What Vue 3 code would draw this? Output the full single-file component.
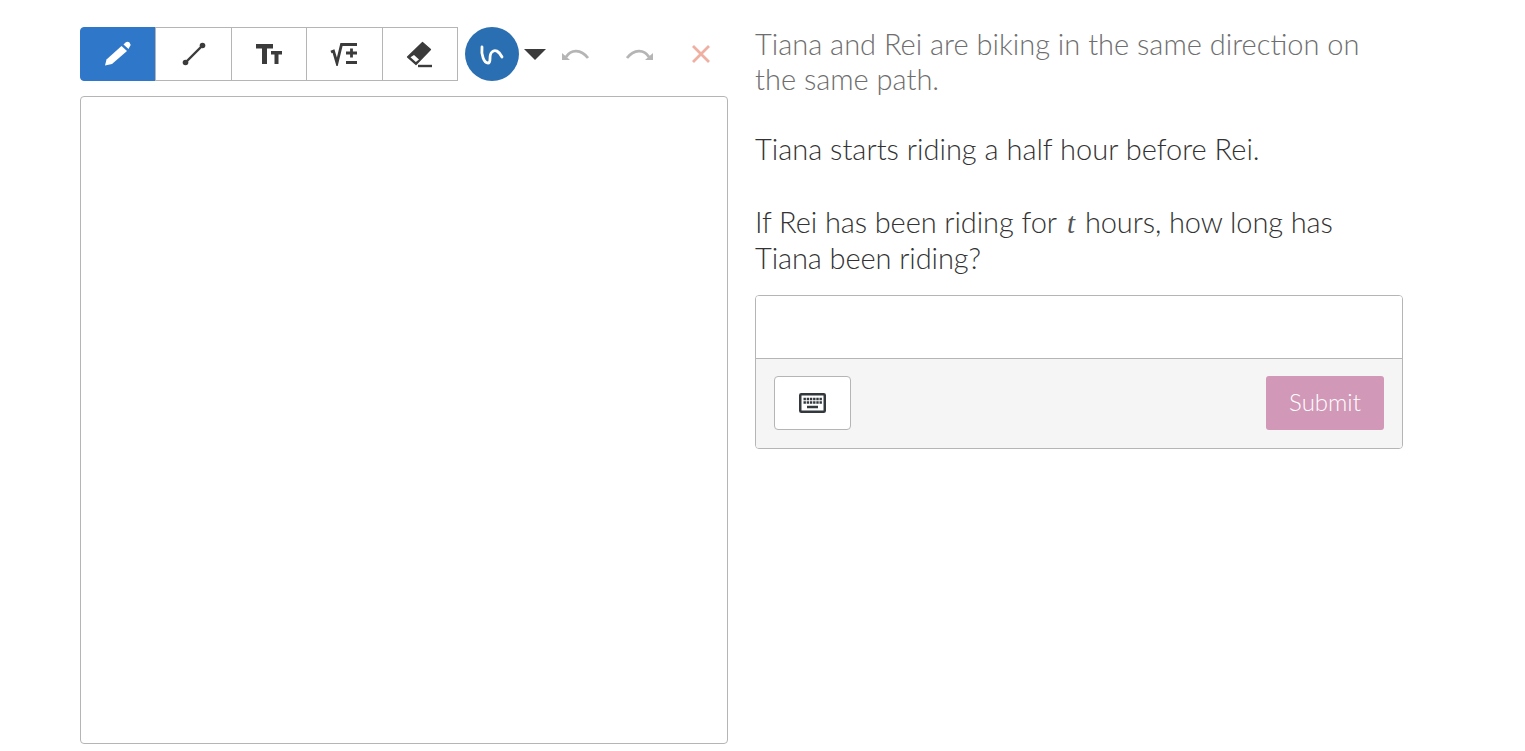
<template>
  <div class="page">
    <div class="left">
      <div class="toolbar">
        <div class="tool-group">
          <button
            v-for="tool in tools"
            :key="tool.name"
            class="tool"
            :class="{ active: tool.name === activeTool }"
          >
            <svg v-if="tool.name === 'pen'" width="30" height="30" viewBox="0 0 30 30">
              <path d="M2 26.500 L3.500 20.500 L18.500 7 L24 12 L9 25 Z" fill="#fff" />
              <path d="M20.500 5.500 L22.500 3.500 Q24.500 1.800 26.500 3.500 Q28.300 5.500 26.800 7.500 L25.500 10 Z" fill="#fff" />
            </svg>
            <svg v-else-if="tool.name === 'line'" width="26" height="26" viewBox="0 0 26 26">
              <path d="M4.500 21.500 L21.500 4.500" stroke="#3b3b3b" stroke-width="2.400" />
              <circle cx="4.500" cy="21.500" r="2.800" fill="#3b3b3b" />
              <circle cx="21.500" cy="4.500" r="2.800" fill="#3b3b3b" />
            </svg>
            <svg v-else-if="tool.name === 'text'" width="28" height="24" viewBox="0 0 28 24">
              <path d="M1 2 H18 V6.500 H12 V22 H7 V6.500 H1 Z" fill="#3b3b3b" />
              <path d="M16 9 H27 V12.500 H23.500 V22 H19.500 V12.500 H16 Z" fill="#3b3b3b" />
            </svg>
            <svg v-else-if="tool.name === 'math'" width="30" height="24" viewBox="0 0 30 24">
              <path d="M2 10 L4.500 9 L8 21 L12.500 2.500 H28" fill="none" stroke="#3b3b3b" stroke-width="2.800" />
              <path d="M17 11 H28 M22.500 6.500 V15.500 M17 20.500 H28" stroke="#3b3b3b" stroke-width="2.800" />
            </svg>
            <svg v-else width="28" height="28" viewBox="0 0 28 28">
              <path d="M16.500 2.500 L24.500 9.500 L10 24.500 L1.500 17 Z" fill="#3b3b3b" stroke="#3b3b3b" stroke-width="1.200" stroke-linejoin="round" />
              <path d="M8 15 L13 19.500 L9.800 22 L4.500 17.200 Z" fill="#fff" />
              <path d="M12 26 H26" stroke="#3b3b3b" stroke-width="2.400" />
            </svg>
          </button>
        </div>
        <div class="color-dot">
          <svg width="28" height="28" viewBox="0 0 28 28">
            <path d="M4 7 C3 15 6 23 10 23 C14 23 10 15 14 12 C17 9 21 11 24 17" fill="none" stroke="#fff" stroke-width="2.800" stroke-linecap="round" />
          </svg>
        </div>
        <div class="caret"></div>
        <svg class="history first" width="30" height="18" viewBox="0 0 30 18">
          <path d="M5 12 C10 4 20 4 27 13" fill="none" stroke="#b5b5b5" stroke-width="2.800" />
          <path d="M1 8 L9 15 L1 15 Z" fill="#b5b5b5" />
        </svg>
        <svg class="history" width="30" height="18" viewBox="0 0 30 18">
          <path d="M25 12 C20 4 10 4 3 13" fill="none" stroke="#b5b5b5" stroke-width="2.800" />
          <path d="M29 8 L21 15 L29 15 Z" fill="#b5b5b5" />
        </svg>
        <svg class="clear" width="20" height="20" viewBox="0 0 20 20">
          <path d="M2 2 L18 18 M18 2 L2 18" stroke="#eeb0a2" stroke-width="2.800" />
        </svg>
      </div>
      <div class="canvas"></div>
    </div>

    <div class="right">
      <p class="muted">Tiana and Rei are biking in the same direction on the same path.</p>
      <p class="second">Tiana starts riding a half hour before Rei.</p>
      <p class="third">If Rei has been riding for<i class="math-var">t</i>hours, how long has Tiana been riding?</p>
      <div class="answer">
        <div class="answer-input"></div>
        <div class="answer-footer">
          <button class="keyboard">
            <svg width="27" height="20" viewBox="0 0 27 20">
              <rect x="1.250" y="1.250" width="24.500" height="17.500" rx="1" fill="#fff" stroke="#33383d" stroke-width="2.500" />
              <path d="M4.500 6 H23 M4.500 9.500 H23" stroke="#33383d" stroke-width="2.400" stroke-dasharray="2.400 0.800" />
              <path d="M8 14 H19" stroke="#33383d" stroke-width="2.400" />
            </svg>
          </button>
          <button class="submit">Submit</button>
        </div>
      </div>
    </div>
  </div>
</template>

<script setup>
const activeTool = 'pen'
const tools = [
  { name: 'pen' },
  { name: 'line' },
  { name: 'text' },
  { name: 'math' },
  { name: 'eraser' }
]
</script>

<style>
html, body {
  background: #fff;
}
</style>

<style scoped>
.page {
  display: flex;
  padding: 26px 0 0 80px;
  font-family: Lato, "Liberation Sans", sans-serif;
  color: #333;
}
.left {
  width: 648px;
  margin: 1px 27px 0 0;
}
.toolbar {
  display: flex;
  align-items: center;
  height: 54px;
}
.tool-group {
  display: flex;
}
.tool {
  width: 76.400px;
  height: 54px;
  margin-left: -1px;
  padding: 0;
  display: flex;
  align-items: center;
  justify-content: center;
  background: #fff;
  border: 1px solid #b5b5b5;
}
.tool:first-child {
  margin-left: 0;
  border-radius: 4px 0 0 4px;
}
.tool.active {
  background: #2f77c9;
  border-color: #2f77c9;
}
.color-dot {
  width: 54px;
  height: 54px;
  margin-left: 7px;
  border-radius: 50%;
  background: #2b6fb3;
  display: flex;
  align-items: center;
  justify-content: center;
}
.caret {
  margin: 0 0 0 5px;
  border-left: 11px solid transparent;
  border-right: 11px solid transparent;
  border-top: 11px solid #3b3b3b;
}
.history {
  margin-left: 33px;
}
.history.first {
  margin-left: 15px;
}
.clear {
  margin-left: 37px;
}
.canvas {
  height: 648px;
  margin-top: 15px;
  box-sizing: border-box;
  border: 1px solid #b5b5b5;
  border-radius: 4px;
  background: #fff;
}
.right {
  width: 648px;
  font-size: 29px;
  font-weight: 300;
  line-height: 35px;
}
p {
  margin: 0;
}
.muted {
  color: #6e6e6e;
  width: 620px;
}
.second {
  margin-top: 35px;
}
.third {
  margin-top: 38px;
  width: 620px;
  line-height: 36px;
  letter-spacing: -0.090px;
}
.math-var {
  font-family: "Liberation Serif", serif;
  line-height: 0;
  margin: 0 10px;
  color: #555;
}
.answer {
  margin-top: 19px;
  border: 1px solid #b5b5b5;
  border-radius: 4px;
  overflow: hidden;
}
.answer-input {
  height: 62px;
  background: #fff;
  border-bottom: 1px solid #b5b5b5;
}
.answer-footer {
  display: flex;
  justify-content: space-between;
  padding: 17px 18px 18px;
  background: #f5f5f5;
}
.keyboard {
  width: 77px;
  height: 54px;
  padding: 0;
  display: flex;
  align-items: center;
  justify-content: center;
  background: #fff;
  border: 1px solid #b5b5b5;
  border-radius: 4px;
}
.submit {
  width: 118px;
  height: 54px;
  padding: 0 0 4px;
  border: none;
  border-radius: 3px;
  background: #d198b8;
  color: #fff;
  font-family: inherit;
  font-size: 24px;
  font-weight: 300;
}
</style>
